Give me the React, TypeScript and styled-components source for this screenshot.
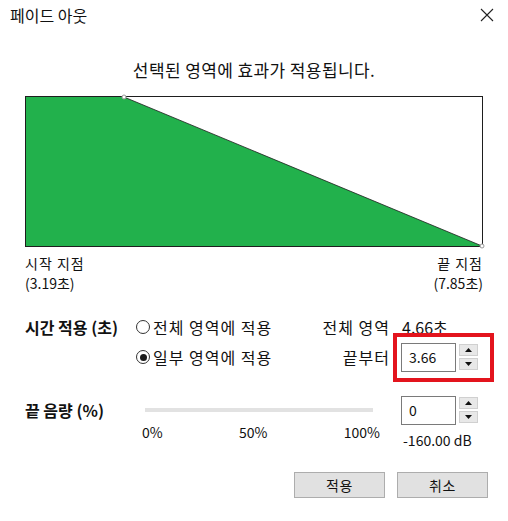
import React from 'react';
import styled, { createGlobalStyle } from 'styled-components';

const GlobalStyle = createGlobalStyle`
  html, body {
    margin: 0;
    padding: 0;
    background: #fff;
  }
  body {
    font-family: "Noto Sans CJK KR", "Noto Sans", sans-serif;
    color: #111;
  }
`;

const Dialog = styled.div`
  width: 508px;
  height: 521px;
  display: flex;
  flex-direction: column;
  overflow: hidden;
  background: #fff;
`;

const TitleBar = styled.div`
  height: 30px;
  display: flex;
  align-items: center;
  justify-content: space-between;
  padding: 0 13px 0 10px;
  font-size: 16px;
`;

const CloseButton = styled.button`
  border: none;
  background: none;
  padding: 0;
  width: 16px;
  height: 16px;
  display: flex;
  align-items: center;
  justify-content: center;
`;

const Subtitle = styled.div`
  margin-top: 28px;
  text-align: center;
  font-size: 17px;
  letter-spacing: 0.4px;
  line-height: 24px;
`;

const Chart = styled.div`
  margin: 14px 25px 0;
  height: 149px;
  border: 1px solid #1e1e1e;
  position: relative;
`;

const ChartSvg = styled.svg`
  display: block;
  width: 100%;
  height: 100%;
  overflow: visible;
`;

const PointLabels = styled.div`
  margin: 6px 25px 0;
  display: flex;
  justify-content: space-between;
  font-size: 14px;
  line-height: 20px;
`;

const PointLabel = styled.div<{ $align: 'left' | 'right' }>`
  display: flex;
  flex-direction: column;
  align-items: ${(p) => (p.$align === 'left' ? 'flex-start' : 'flex-end')};
`;

const PointName = styled.span`
  letter-spacing: 1px;
`;

const TimeGrid = styled.div`
  margin: 19px 0 0 25px;
  display: grid;
  grid-template-columns: 110px 160px 106px 80px;
  grid-auto-rows: 30px;
  align-items: center;
  font-size: 16px;
`;

const SectionLabel = styled.div`
  font-weight: 700;
  font-size: 16px;
`;

const RadioOption = styled.label`
  display: flex;
  align-items: center;
  gap: 3px;
  white-space: nowrap;
  letter-spacing: 1px;
`;

const RadioCircle = styled.span<{ $checked?: boolean }>`
  width: 14px;
  height: 14px;
  margin-left: 1px;
  border: 1px solid #333;
  border-radius: 50%;
  display: inline-flex;
  align-items: center;
  justify-content: center;
  box-sizing: border-box;
  flex-shrink: 0;
  &::after {
    content: '';
    width: 7px;
    height: 7px;
    border-radius: 50%;
    background: ${(p) => (p.$checked ? '#1a1a1a' : 'transparent')};
  }
`;

const FieldLabel = styled.div`
  text-align: right;
  padding-right: 11px;
  white-space: nowrap;
  letter-spacing: 1px;
`;

const Value = styled.div`
  padding-left: 1px;
`;

const Spinner = styled.div<{ $highlight?: boolean }>`
  position: relative;
  display: flex;
  align-items: center;
  gap: 3px;
  ${(p) =>
    p.$highlight &&
    `
    &::after {
      content: '';
      position: absolute;
      left: -8px;
      right: -13px;
      top: -10px;
      bottom: -10px;
      border: 4px solid #e3141d;
      pointer-events: none;
    }
  `}
`;

const NumberBox = styled.div`
  width: 55px;
  height: 29px;
  box-sizing: border-box;
  border: 1px solid #7a7a7a;
  background: #fff;
  display: flex;
  align-items: center;
  padding-left: 7px;
  font-size: 14px;
`;

const SpinButtons = styled.div`
  display: flex;
  flex-direction: column;
  gap: 2px;
`;

const SpinButton = styled.div`
  width: 19px;
  height: 12px;
  box-sizing: border-box;
  border: 1px solid #d0d0d0;
  background: #e8e8e8;
  display: flex;
  align-items: center;
  justify-content: center;
`;

const VolumeGrid = styled.div`
  margin: 23px 0 0 25px;
  display: grid;
  grid-template-columns: 117px 238px 101px;
  font-size: 15px;
`;

const VolumeLabel = styled(SectionLabel)`
  height: 30px;
  display: flex;
  align-items: center;
`;

const SliderColumn = styled.div`
  display: flex;
  flex-direction: column;
`;

const SliderTrackArea = styled.div`
  height: 30px;
  display: flex;
  align-items: center;
  padding: 0 7px 0 3px;
`;

const SliderTrack = styled.div`
  flex: 1;
  height: 4px;
  background: #e2e2e2;
`;

const Ticks = styled.div`
  display: flex;
  justify-content: space-between;
  font-size: 14px;
  line-height: 16px;
  margin-top: -1px;
`;

const InputColumn = styled.div`
  display: flex;
  flex-direction: column;
  padding-left: 21px;
`;

const SpinnerRow = styled.div`
  height: 30px;
  display: flex;
  align-items: center;
`;

const DbText = styled.div`
  margin-top: 6px;
  padding-left: 2px;
  font-size: 14px;
  line-height: 18px;
`;

const ButtonRow = styled.div`
  margin-top: 23px;
  display: flex;
  justify-content: flex-end;
  gap: 12px;
  padding-right: 20px;
`;

const DialogButton = styled.button`
  width: 91px;
  height: 26px;
  border: 1px solid #adadad;
  background: #e1e1e1;
  font-family: inherit;
  font-size: 14px;
  letter-spacing: 0.5px;
  color: #111;
  padding: 0;
`;

const Triangle = ({ up }: { up?: boolean }) => (
  <svg width="7" height="4" viewBox="0 0 7 4">
    <polygon points={up ? '0,4 7,4 3.5,0' : '0,0 7,0 3.5,4'} fill="#111" />
  </svg>
);

const NumberSpinner = ({ value, highlight }: { value: string; highlight?: boolean }) => (
  <Spinner $highlight={highlight}>
    <NumberBox>{value}</NumberBox>
    <SpinButtons>
      <SpinButton>
        <Triangle up />
      </SpinButton>
      <SpinButton>
        <Triangle />
      </SpinButton>
    </SpinButtons>
  </Spinner>
);

export default function App() {
  return (
    <Dialog>
      <GlobalStyle />
      <TitleBar>
        <span>페이드 아웃</span>
        <CloseButton aria-label="닫기">
          <svg width="14" height="14" viewBox="0 0 14 14">
            <path d="M1 1 L13 13 M13 1 L1 13" stroke="#222" strokeWidth="1.1" />
          </svg>
        </CloseButton>
      </TitleBar>

      <Subtitle>선택된 영역에 효과가 적용됩니다.</Subtitle>

      <Chart>
        <ChartSvg viewBox="0 0 456 149" preserveAspectRatio="none">
          <polygon points="0,0 98,0 456,149 0,149" fill="#22b14c" />
          <line x1="98" y1="0" x2="456" y2="149" stroke="#1e1e1e" strokeWidth="0.8" />
          <circle cx="98" cy="0" r="2" fill="#fff" stroke="#999" strokeWidth="1" />
          <circle cx="456" cy="149" r="2" fill="#fff" stroke="#999" strokeWidth="1" />
        </ChartSvg>
      </Chart>

      <PointLabels>
        <PointLabel $align="left">
          <PointName>시작 지점</PointName>
          <span>(3.19초)</span>
        </PointLabel>
        <PointLabel $align="right">
          <PointName>끝 지점</PointName>
          <span>(7.85초)</span>
        </PointLabel>
      </PointLabels>

      <TimeGrid>
        <SectionLabel>시간 적용 (초)</SectionLabel>
        <RadioOption>
          <RadioCircle />
          전체 영역에 적용
        </RadioOption>
        <FieldLabel>전체 영역</FieldLabel>
        <Value>4.66초</Value>

        <div />
        <RadioOption>
          <RadioCircle $checked />
          일부 영역에 적용
        </RadioOption>
        <FieldLabel>끝부터</FieldLabel>
        <NumberSpinner value="3.66" highlight />
      </TimeGrid>

      <VolumeGrid>
        <VolumeLabel>끝 음량 (%)</VolumeLabel>
        <SliderColumn>
          <SliderTrackArea>
            <SliderTrack />
          </SliderTrackArea>
          <Ticks>
            <span>0%</span>
            <span>50%</span>
            <span>100%</span>
          </Ticks>
        </SliderColumn>
        <InputColumn>
          <SpinnerRow>
            <NumberSpinner value="0" />
          </SpinnerRow>
          <DbText>-160.00 dB</DbText>
        </InputColumn>
      </VolumeGrid>

      <ButtonRow>
        <DialogButton>적용</DialogButton>
        <DialogButton>취소</DialogButton>
      </ButtonRow>
    </Dialog>
  );
}
